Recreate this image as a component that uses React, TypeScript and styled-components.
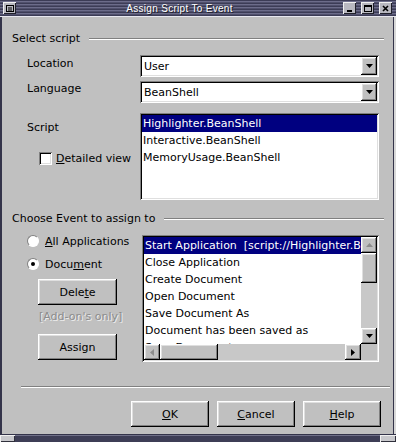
import styled, { createGlobalStyle } from 'styled-components'

const face = '#c0c0c0'
const sunken = 'inset 1px 1px #808080, inset -1px -1px #ffffff, inset 2px 2px #000000, inset -2px -2px #dfdfdf'
const raised = 'inset -1px -1px #000000, inset 1px 1px #ffffff, inset -2px -2px #808080, inset 2px 2px #dfdfdf'

const GlobalStyle = createGlobalStyle`
  html, body {
    margin: 0;
    padding: 0;
    background: ${face};
  }
  body {
    font-family: "DejaVu Sans", sans-serif;
    font-size: 11px;
    color: #000;
  }
`

const Window = styled.div`
  width: 396px;
  height: 442px;
  display: flex;
  flex-direction: column;
  background: ${face};
  overflow: hidden;
`

const TitleBar = styled.div`
  height: 17px;
  flex: none;
  display: flex;
  align-items: center;
  padding: 0 4px 0 3px;
  box-sizing: border-box;
  background: repeating-linear-gradient(to bottom, #3c3c56 0 1px, #6c6c8a 1px 2px, #50506c 2px 3px);
  border-bottom: 1px solid #e8e8f0;
`

const Title = styled.div`
  flex: 1;
  text-align: center;
  color: #fff;
  font-family: "Liberation Sans", sans-serif;
  font-size: 10px;
  letter-spacing: 0.3px;
  text-shadow: 1px 1px #20202c;
`

const TitleButtons = styled.div`
  display: flex;
  gap: 5px;
`

const TitleButton = styled.span`
  width: 13px;
  height: 12px;
  box-sizing: border-box;
  background: #b8b8c0;
  box-shadow: inset 1px 1px #f0f0f0, inset -1px -1px #20202a;
  display: flex;
  align-items: center;
  justify-content: center;
`

const Frame = styled.div`
  flex: 1;
  display: flex;
  flex-direction: column;
  padding: 0 8px 0 10px;
  border-left: 2px solid #34344a;
  border-right: 1px solid #34344a;
  box-shadow: 2px 0 0 #d8d8d8;
  margin-right: 2px;
`

const GroupHeader = styled.div<{ $top: number }>`
  display: flex;
  align-items: center;
  gap: 9px;
  height: 14px;
  line-height: 14px;
  margin-top: ${(p) => p.$top}px;
  margin-right: 1px;
  white-space: nowrap;
`

const Rule = styled.div`
  flex: 1;
  height: 0;
  border-top: 1px solid #808080;
  border-bottom: 1px solid #ffffff;
`

const ScriptGrid = styled.div`
  display: grid;
  grid-template-columns: 113px 1fr;
  grid-template-rows: 22px 22px 93px;
  row-gap: 4px;
  margin: 9px 6px 0 15px;
  & > :nth-child(5),
  & > :nth-child(6) {
    margin-top: 6px;
  }
`

const Label = styled.div<{ $shift?: number }>`
  line-height: 14px;
  margin-top: ${(p) => p.$shift ?? 2}px;
`

const Combo = styled.div`
  display: flex;
  padding: 2px;
  background: #fff;
  box-shadow: ${sunken};
`

const ComboValue = styled.span`
  flex: 1;
  padding: 1px 0 0 2px;
  line-height: 17px;
`

const DropButton = styled.span`
  width: 16px;
  background: ${face};
  box-shadow: ${raised};
  display: flex;
  align-items: center;
  justify-content: center;
`

const LeftStack = styled.div`
  display: flex;
  flex-direction: column;
`

const CheckRow = styled.label`
  display: flex;
  align-items: center;
  gap: 4px;
  margin: 17px 0 0 12px;
  white-space: nowrap;
`

const CheckBox = styled.span`
  width: 13px;
  height: 13px;
  background: #fff;
  box-shadow: ${sunken};
`

const ListBox = styled.div`
  padding: 2px;
  background: #fff;
  box-shadow: ${sunken};
  overflow: hidden;
`

const ListItem = styled.div<{ $selected?: boolean }>`
  height: 17px;
  line-height: 17px;
  padding-left: 1px;
  white-space: pre;
  overflow: hidden;
  background: ${(p) => (p.$selected ? '#000080' : 'transparent')};
  color: ${(p) => (p.$selected ? '#fff' : '#000')};
`

const EventRow = styled.div`
  display: flex;
  margin: 9px 2px 0 15px;
`

const EventControls = styled.div`
  width: 115px;
  flex: none;
  display: flex;
  flex-direction: column;
`

const RadioRow = styled.label<{ $top: number }>`
  display: flex;
  align-items: center;
  gap: 6px;
  height: 12px;
  margin-top: ${(p) => p.$top}px;
  white-space: nowrap;
`

const Radio = styled.span<{ $checked?: boolean }>`
  width: 12px;
  height: 12px;
  border-radius: 50%;
  box-sizing: border-box;
  background: #fff;
  border: 1px solid;
  border-color: #808080 #fff #fff #808080;
  display: flex;
  align-items: center;
  justify-content: center;
  &::after {
    content: '';
    width: 4px;
    height: 4px;
    border-radius: 50%;
    background: ${(p) => (p.$checked ? '#000' : 'transparent')};
  }
`

const Button = styled.button<{ $top?: number }>`
  width: 79px;
  height: 26px;
  margin-top: ${(p) => p.$top ?? 0}px;
  padding: 0;
  border: none;
  background: ${face};
  box-shadow: ${raised};
  font: inherit;
  color: #000;
`

const SideButton = styled(Button)`
  margin-left: 11px;
`

const Hint = styled.div`
  margin: 5px 0 0 12px;
  line-height: 14px;
  color: #8c8c8c;
  text-shadow: 1px 1px #eeeeee;
`

const EventList = styled.div`
  width: 237px;
  height: 127px;
  box-sizing: border-box;
  padding: 2px;
  background: #fff;
  box-shadow: ${sunken};
  display: grid;
  grid-template-columns: 217px 16px;
  grid-template-rows: 107px 16px;
`

const EventItems = styled.div`
  overflow: hidden;
  min-width: 0;
`

const VScroll = styled.div`
  display: flex;
  flex-direction: column;
  background: #c8c8c8;
`

const HScroll = styled.div`
  display: flex;
  background: #c8c8c8;
`

const Corner = styled.div`
  background: ${face};
`

const ScrollButton = styled.span`
  width: 16px;
  height: 16px;
  flex: none;
  box-sizing: border-box;
  background: ${face};
  box-shadow: ${raised};
  display: flex;
  align-items: center;
  justify-content: center;
`

const VThumb = styled.span<{ $len: number }>`
  height: ${(p) => p.$len}px;
  flex: none;
  background: ${face};
  box-shadow: ${raised};
`

const HThumb = styled.span<{ $len: number }>`
  width: ${(p) => p.$len}px;
  flex: none;
  background: ${face};
  box-shadow: ${raised};
`

const Track = styled.span`
  flex: 1;
`

const Gap = styled.div<{ $h: number }>`
  height: ${(p) => p.$h}px;
  flex: none;
`

const BottomRule = styled.div`
  height: 0;
  border-top: 1px solid #808080;
  border-bottom: 1px solid #ffffff;
  margin: 0 -5px 0 9px;
`

const ButtonRow = styled.div`
  display: flex;
  justify-content: flex-end;
  gap: 8px;
  margin: 13px 4px 0 0;
  & > button {
    width: 78px;
  }
`

const BottomBar = styled.div`
  height: 8px;
  flex: none;
  display: flex;
  border-top: 1px solid #34344a;
  box-sizing: border-box;
`

const BarCorner = styled.span<{ $w: number }>`
  width: ${(p) => p.$w}px;
  background: #c8c8cc;
  box-shadow: inset 1px 1px #f0f0f0, inset -1px -1px #30303c;
`

const BarMiddle = styled.span`
  flex: 1;
  background: #3e3e56;
  box-shadow: inset 0 1px #707088;
`

const Arrow = ({ dir }: { dir: 'up' | 'down' | 'left' | 'right' }) => {
  const pts = {
    down: '0,0 7,0 3.5,4',
    up: '0,4 7,4 3.5,0',
    left: '4,0 4,7 0,3.5',
    right: '0,0 0,7 4,3.5',
  }[dir]
  const vertical = dir === 'up' || dir === 'down'
  const fill = dir === 'up' || dir === 'left' ? '#8c8c8c' : '#000'
  return (
    <svg width={vertical ? 7 : 4} height={vertical ? 4 : 7} viewBox={vertical ? '0 0 7 4' : '0 0 4 7'}>
      <polygon points={pts} fill={fill} />
    </svg>
  )
}

const U = styled.span`
  text-decoration: underline;
`

const events = [
  'Start Application  [script://Highlighter.BeanShell?language=BeanShell&location=user]',
  'Close Application',
  'Create Document',
  'Open Document',
  'Save Document As',
  'Document has been saved as',
  'Save Document',
]

const App: React.FC = () => {
  return (
    <Window>
      <GlobalStyle />
      <TitleBar>
        <TitleButton>
          <svg width="8" height="7" viewBox="0 0 8 7">
            <rect x="0.5" y="0.5" width="7" height="6" fill="none" stroke="#000" />
            <line x1="2" y1="3" x2="6" y2="3" stroke="#000" />
            <line x1="2" y1="5" x2="6" y2="5" stroke="#000" />
          </svg>
        </TitleButton>
        <Title>Assign Script To Event</Title>
        <TitleButtons>
          <TitleButton>
            <svg width="7" height="7" viewBox="0 0 7 7">
              <rect x="1" y="5" width="5" height="2" fill="#000" />
            </svg>
          </TitleButton>
          <TitleButton>
            <svg width="8" height="7" viewBox="0 0 8 7">
              <rect x="0.5" y="0.5" width="7" height="6" fill="none" stroke="#000" />
              <line x1="0" y1="1.5" x2="8" y2="1.5" stroke="#000" />
            </svg>
          </TitleButton>
          <TitleButton>
            <svg width="7" height="7" viewBox="0 0 7 7">
              <path d="M1 1 L6 6 M6 1 L1 6" stroke="#000" strokeWidth="1.6" />
            </svg>
          </TitleButton>
        </TitleButtons>
      </TitleBar>

      <Frame>
        <GroupHeader $top={15}>
          <span>Select script</span>
          <Rule />
        </GroupHeader>

        <ScriptGrid>
          <Label>Location</Label>
          <Combo>
            <ComboValue>User</ComboValue>
            <DropButton>
              <Arrow dir="down" />
            </DropButton>
          </Combo>
          <Label $shift={1}>Language</Label>
          <Combo>
            <ComboValue>BeanShell</ComboValue>
            <DropButton>
              <Arrow dir="down" />
            </DropButton>
          </Combo>
          <LeftStack>
            <Label $shift={8}>Script</Label>
            <CheckRow>
              <CheckBox />
              <span>
                <U>D</U>etailed view
              </span>
            </CheckRow>
          </LeftStack>
          <ListBox>
            <ListItem $selected>Highlighter.BeanShell</ListItem>
            <ListItem>Interactive.BeanShell</ListItem>
            <ListItem>MemoryUsage.BeanShell</ListItem>
          </ListBox>
        </ScriptGrid>

        <GroupHeader $top={12}>
          <span>Choose Event to assign to</span>
          <Rule />
        </GroupHeader>

        <EventRow>
          <EventControls>
            <RadioRow $top={0}>
              <Radio />
              <span>
                <U>A</U>ll Applications
              </span>
            </RadioRow>
            <RadioRow $top={11}>
              <Radio $checked />
              <span>
                Docu<U>m</U>ent
              </span>
            </RadioRow>
            <SideButton $top={9}>
              Dele<U>t</U>e
            </SideButton>
            <Hint>[Add-on's only]</Hint>
            <SideButton $top={10}>Assign</SideButton>
          </EventControls>

          <EventList>
            <EventItems>
              {events.map((e, i) => (
                <ListItem key={e} $selected={i === 0}>
                  {e}
                </ListItem>
              ))}
            </EventItems>
            <VScroll>
              <ScrollButton>
                <Arrow dir="up" />
              </ScrollButton>
              <VThumb $len={30} />
              <Track />
              <ScrollButton>
                <Arrow dir="down" />
              </ScrollButton>
            </VScroll>
            <HScroll>
              <ScrollButton>
                <Arrow dir="left" />
              </ScrollButton>
              <HThumb $len={58} />
              <Track />
              <ScrollButton>
                <Arrow dir="right" />
              </ScrollButton>
            </HScroll>
            <Corner />
          </EventList>
        </EventRow>

        <Gap $h={24} />
        <BottomRule />

        <ButtonRow>
          <Button>
            <U>O</U>K
          </Button>
          <Button>
            <U>C</U>ancel
          </Button>
          <Button>
            <U>H</U>elp
          </Button>
        </ButtonRow>
      </Frame>

      <BottomBar>
        <BarCorner $w={15} />
        <BarMiddle />
        <BarCorner $w={16} />
      </BottomBar>
    </Window>
  )
}

export default App
